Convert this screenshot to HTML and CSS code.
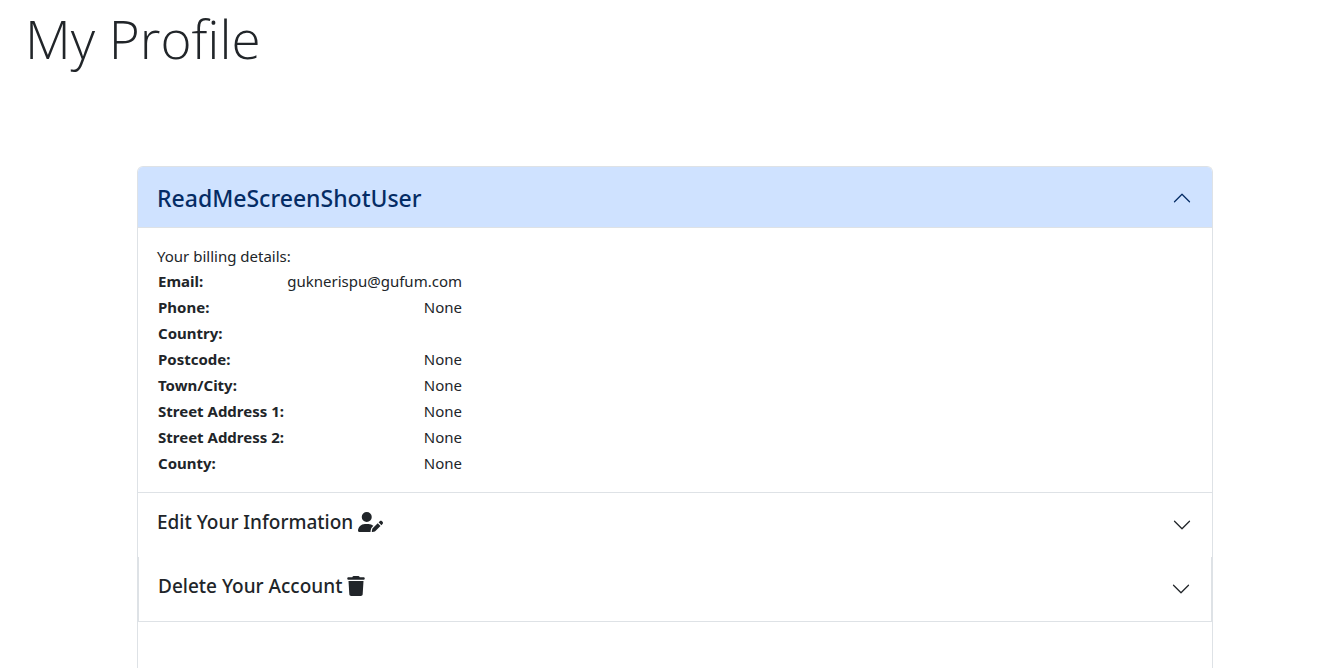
FILE: index.html
```html
<!DOCTYPE html>
<html lang="en">
<head>
<meta charset="utf-8">
<title>My Profile</title>
<link rel="stylesheet" href="styles.css">
</head>
<body>
<header class="page-header"><h1 class="page-title">My Profile</h1></header>
<main class="accordion">
  <section class="item">
    <h2 class="item-heading">
      <button class="toggle toggle-open" type="button" aria-expanded="true" aria-controls="billing">
        <span class="title">ReadMeScreenShotUser</span>
        <svg class="chevron" viewBox="0 0 16 16" aria-hidden="true"><path d="M2 11l6-6 6 6"/></svg>
      </button>
    </h2>
    <div class="item-body" id="billing">
      <p class="intro">Your billing details:</p>
      <table class="details">
        <tbody>
          <tr><th scope="row">Email:</th><td>guknerispu@gufum.com</td></tr>
          <tr><th scope="row">Phone:</th><td>None</td></tr>
          <tr><th scope="row">Country:</th><td></td></tr>
          <tr><th scope="row">Postcode:</th><td>None</td></tr>
          <tr><th scope="row">Town/City:</th><td>None</td></tr>
          <tr><th scope="row">Street Address 1:</th><td>None</td></tr>
          <tr><th scope="row">Street Address 2:</th><td>None</td></tr>
          <tr><th scope="row">County:</th><td>None</td></tr>
        </tbody>
      </table>
    </div>
  </section>
  <section class="item">
    <h3 class="item-heading">
      <button class="toggle" type="button" aria-expanded="false">
        <span class="label">Edit Your Information
          <svg class="icon-pen" viewBox="0 0 640 512" aria-hidden="true"><path d="M224 256A128 128 0 1 0 224 0a128 128 0 1 0 0 256zm-45.7 48C79.8 304 0 383.8 0 482.3C0 498.7 13.3 512 29.7 512H322.8c-3.1-8.8-3.7-18.4-1.4-27.8l15-60.1c2.8-11.3 8.6-21.5 16.8-29.7l40.3-40.3c-32.1-31-75.7-50.1-123.9-50.1H178.3zm435.5-68.3c-15.6-15.6-40.9-15.6-56.6 0l-29.4 29.4 71 71 29.4-29.4c15.6-15.6 15.6-40.9 0-56.6l-14.4-14.4zM375.9 417c-4.1 4.1-7 9.2-8.4 14.9l-15 60.1c-1.4 5.5 .2 11.2 4.2 15.2s9.7 5.6 15.2 4.2l60.1-15c5.6-1.4 10.8-4.3 14.9-8.4L576.1 358.7l-71-71L375.9 417z"/></svg>
        </span>
        <svg class="chevron" viewBox="0 0 16 16" aria-hidden="true"><path d="M2 5l6 6 6-6"/></svg>
      </button>
    </h3>
    <div class="nested">
      <h3 class="item-heading">
        <button class="toggle" type="button" aria-expanded="false">
          <span class="label">Delete Your Account
            <svg class="icon-trash" viewBox="0 0 448 512" aria-hidden="true"><path d="M135.2 17.7L128 32H32C14.3 32 0 46.3 0 64S14.3 96 32 96H416c17.7 0 32-14.3 32-32s-14.3-32-32-32H320l-7.2-14.3C307.4 6.8 296.3 0 284.2 0H163.8c-12.1 0-23.2 6.8-28.6 17.7zM416 128H32L53.2 467c1.6 25.3 22.6 45 47.9 45H346.9c25.3 0 46.3-19.7 47.9-45L416 128z"/></svg>
          </span>
          <svg class="chevron" viewBox="0 0 16 16" aria-hidden="true"><path d="M2 5l6 6 6-6"/></svg>
        </button>
      </h3>
    </div>
  </section>
</main>
</body>
</html>
```
FILE: styles.css
```css
* {
  box-sizing: border-box;
}

body {
  display: flex;
  flex-direction: column;
  min-height: 100vh;
  margin: 0;
  background: #fff;
  color: #212529;
  font-family: "Segoe UI", "Noto Sans", sans-serif;
  font-size: 15px;
  line-height: 24px;
}

.page-header {
  padding: 5px 25px 1px;
}

.page-title {
  margin: 0;
  font-family: "Segoe UI", "Open Sans", sans-serif;
  font-size: 53px;
  font-weight: 300;
  line-height: 68px;
}

.accordion {
  flex: 1;
  margin: 92px 123px 0 137px;
  border: 1px solid #dee2e6;
  border-bottom: 0;
  border-radius: 6px 6px 0 0;
}

.item-heading {
  margin: 0;
}

.toggle {
  display: flex;
  align-items: center;
  justify-content: space-between;
  width: 100%;
  padding: 16px 20px 16px 19px;
  border: 0;
  background: #fff;
  color: inherit;
  font-family: inherit;
  font-size: 19px;
  font-weight: 500;
  line-height: 26px;
  text-align: left;
  cursor: pointer;
}

.toggle-open {
  padding-top: 18px;
  border-bottom: 1px solid #dee2e6;
  border-radius: 5px 5px 0 0;
  background: #cfe2ff;
  color: #052c65;
  font-size: 23px;
}

.label {
  display: flex;
  align-items: center;
  gap: 5px;
  padding-bottom: 6px;
}

.chevron {
  width: 20px;
  height: 20px;
  fill: none;
  stroke: currentColor;
  stroke-linecap: round;
  stroke-linejoin: round;
}

.icon-pen,
.icon-trash {
  height: 20px;
  fill: currentColor;
}

.icon-pen {
  width: 25px;
}

.icon-trash {
  width: 18px;
}

.item-body {
  padding: 16px 19px;
  border-bottom: 1px solid #dee2e6;
}

.intro {
  margin: 0;
}

.details {
  width: 306px;
  border-collapse: collapse;
}

.details th,
.details td {
  height: 26px;
  padding: 0 1px;
}

.details th {
  font-weight: 700;
  text-align: left;
}

.details td {
  text-align: right;
}

.nested {
  border: 1px solid #dee2e6;
  border-top: 0;
}
```
